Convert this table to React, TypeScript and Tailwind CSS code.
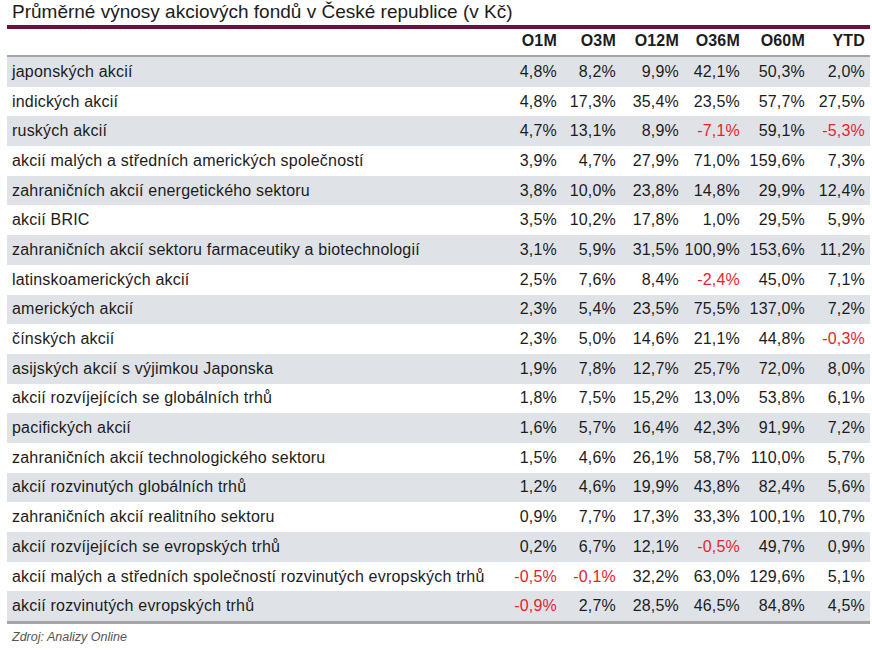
import React from 'react';

type Row = { name: string; values: string[] };

const columns = ['O1M', 'O3M', 'O12M', 'O36M', 'O60M', 'YTD'];

const rows: Row[] = [
  { name: 'japonských akcií', values: ['4,8%', '8,2%', '9,9%', '42,1%', '50,3%', '2,0%'] },
  { name: 'indických akcií', values: ['4,8%', '17,3%', '35,4%', '23,5%', '57,7%', '27,5%'] },
  { name: 'ruských akcií', values: ['4,7%', '13,1%', '8,9%', '-7,1%', '59,1%', '-5,3%'] },
  { name: 'akcií malých a středních amerických společností', values: ['3,9%', '4,7%', '27,9%', '71,0%', '159,6%', '7,3%'] },
  { name: 'zahraničních akcií energetického sektoru', values: ['3,8%', '10,0%', '23,8%', '14,8%', '29,9%', '12,4%'] },
  { name: 'akcií BRIC', values: ['3,5%', '10,2%', '17,8%', '1,0%', '29,5%', '5,9%'] },
  { name: 'zahraničních akcií sektoru farmaceutiky a biotechnologií', values: ['3,1%', '5,9%', '31,5%', '100,9%', '153,6%', '11,2%'] },
  { name: 'latinskoamerických akcií', values: ['2,5%', '7,6%', '8,4%', '-2,4%', '45,0%', '7,1%'] },
  { name: 'amerických akcií', values: ['2,3%', '5,4%', '23,5%', '75,5%', '137,0%', '7,2%'] },
  { name: 'čínských akcií', values: ['2,3%', '5,0%', '14,6%', '21,1%', '44,8%', '-0,3%'] },
  { name: 'asijských akcií s výjimkou Japonska', values: ['1,9%', '7,8%', '12,7%', '25,7%', '72,0%', '8,0%'] },
  { name: 'akcií rozvíjejících se globálních trhů', values: ['1,8%', '7,5%', '15,2%', '13,0%', '53,8%', '6,1%'] },
  { name: 'pacifických akcií', values: ['1,6%', '5,7%', '16,4%', '42,3%', '91,9%', '7,2%'] },
  { name: 'zahraničních akcií technologického sektoru', values: ['1,5%', '4,6%', '26,1%', '58,7%', '110,0%', '5,7%'] },
  { name: 'akcií rozvinutých globálních trhů', values: ['1,2%', '4,6%', '19,9%', '43,8%', '82,4%', '5,6%'] },
  { name: 'zahraničních akcií realitního sektoru', values: ['0,9%', '7,7%', '17,3%', '33,3%', '100,1%', '10,7%'] },
  { name: 'akcií rozvíjejících se evropských trhů', values: ['0,2%', '6,7%', '12,1%', '-0,5%', '49,7%', '0,9%'] },
  { name: 'akcií malých a středních společností rozvinutých evropských trhů', values: ['-0,5%', '-0,1%', '32,2%', '63,0%', '129,6%', '5,1%'] },
  { name: 'akcií rozvinutých evropských trhů', values: ['-0,9%', '2,7%', '28,5%', '46,5%', '84,8%', '4,5%'] },
];

const grid = 'grid grid-cols-[1fr_60px_59px_63px_61px_65px_60px] pr-[5px]';

export default function App() {
  return (
    <div className="w-[872px] h-[650px] bg-white text-[#1c1c1c] font-['Liberation_Sans',Arial,sans-serif]">
      <h1 className="pl-[12px] pt-[1px] h-[25px] text-[19px] leading-[22px]">
        Průměrné výnosy akciových fondů v České republice (v Kč)
      </h1>
      <div className="ml-[7px] w-[863px]">
        <div className="h-[4px] bg-[#6e0f3f]" />
        {/* header */}
        <div className={`${grid} h-[28px] items-end pb-[3px] text-[16px] tracking-[0.2px] font-bold border-b-2 border-[#a5a5a5]`}>
          <div />
          {columns.map((c) => (
            <div key={c} className="text-right">{c}</div>
          ))}
        </div>
        {rows.map((row, i) => (
          <div
            key={row.name}
            className={`${grid} h-[29.7px] items-center text-[16px] tracking-[0.2px] ${i % 2 === 0 ? 'bg-[#dfe3e8]' : 'bg-white'}`}
          >
            <div className="pl-[5px] whitespace-nowrap">{row.name}</div>
            {row.values.map((v, j) => (
              <div key={j} className={`text-right ${v.startsWith('-') ? 'text-[#e5232d]' : ''}`}>
                {v}
              </div>
            ))}
          </div>
        ))}
        <div className="h-[3px] bg-[#a5a5a5]" />
        <div className="pl-[5px] pt-[4px] text-[12.5px] italic text-[#555]">Zdroj: Analizy Online</div>
      </div>
    </div>
  );
}
